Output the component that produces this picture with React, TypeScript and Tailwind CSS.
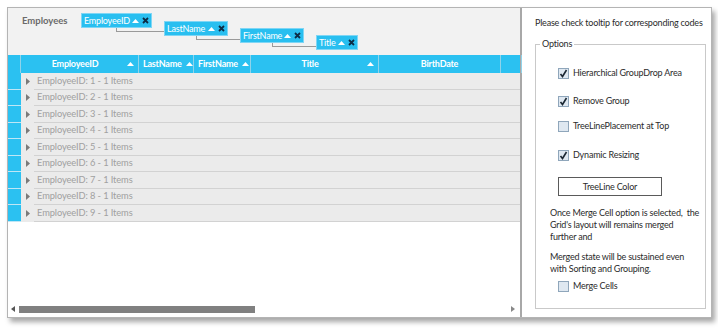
import React from "react";

const font = { fontFamily: 'Lato, "Open Sans", "DejaVu Sans", sans-serif' };

function Up({ className = "" }: { className?: string }) {
  return (
    <svg width="7" height="4" viewBox="0 0 7 4" className={className}>
      <polygon points="0,4 3.5,0 7,4" fill="currentColor" />
    </svg>
  );
}

function Chip({ label, x, y, w }: { label: string; x: number; y: number; w: number }) {
  return (
    <div
      className="absolute flex items-center h-[15px] bg-[#29bff0] border border-[#7fd6f5] text-white text-[9px] tracking-[-0.2px] leading-none pl-[2px] pr-[2px] whitespace-nowrap"
      style={{ left: x, top: y, width: w }}
    >
      <span className="flex-1">{label}</span>
      <Up className="text-white mr-[3px] shrink-0" />
      <svg width="7" height="7" viewBox="0 0 7 7" className="shrink-0">
        <path d="M1 1 L6 6 M6 1 L1 6" stroke="#0d2c45" strokeWidth="1.8" />
      </svg>
    </div>
  );
}

function Check({ checked }: { checked: boolean }) {
  return (
    <div className="w-[11px] h-[11px] shrink-0 border border-[#8fa6bb] bg-[#dfe8f1] flex items-center justify-center">
      {checked && (
        <svg width="9" height="9" viewBox="0 0 9 9">
          <path d="M1.5 5 L3.5 7.5 L7.5 1" stroke="#1b2733" strokeWidth="1.6" fill="none" />
        </svg>
      )}
    </div>
  );
}

export default function App() {
  const cols = [
    { name: "EmployeeID", w: 118, arrow: true, center: true },
    { name: "LastName", w: 55, arrow: true },
    { name: "FirstName", w: 57, arrow: true },
    { name: "Title", w: 128, arrow: true, center: true },
    { name: "BirthDate", w: 122, arrow: false, center: true },
    { name: "", w: 21, arrow: false },
  ];
  return (
    <div className="w-[718px] h-[330px] bg-white overflow-hidden pl-[7px] pt-[7px]" style={font}>
      <div className="flex w-[705px] h-[311px] border border-[#b4b4b4] shadow-[3px_4px_5px_rgba(0,0,0,0.35)] overflow-hidden">
        {/* Left grid panel */}
        <div className="w-[514px] shrink-0 h-full flex flex-col bg-white border-r-2 border-[#a8a8a8]">
          {/* group drop area */}
          <div className="relative h-[47px] bg-[#f2f2f2] shrink-0">
            <div className="absolute left-[14px] top-[6px] text-[9.5px] font-bold text-[#6b6b6b]">Employees</div>
            {/* connectors */}
            <div className="absolute left-[108px] top-[19px] w-[49px] h-[5px] border-l border-b border-[#9a9a9a]" />
            <div className="absolute left-[188px] top-[27px] w-[45px] h-[5px] border-l border-b border-[#9a9a9a]" />
            <div className="absolute left-[264px] top-[34px] w-[45px] h-[5px] border-l border-b border-[#9a9a9a]" />
            <Chip label="EmployeeID" x={73} y={5} w={71} />
            <Chip label="LastName" x={156} y={13} w={64} />
            <Chip label="FirstName" x={232} y={20} w={64} />
            <Chip label="Title" x={308} y={27} w={42} />
          </div>
          {/* header */}
          <div className="flex h-[18px] bg-[#2bc1f1] shrink-0">
            <div className="w-[13px] shrink-0 border-r border-[#8fd3ea]" />
            {cols.map((c, i) => (
              <div
                key={i}
                className="relative flex items-center shrink-0 h-full border-r border-[#8fd3ea] text-white font-bold text-[9px] tracking-[-0.2px] px-[4px] whitespace-nowrap"
                style={{ width: c.w }}
              >
                <span className={c.center ? "flex-1 text-center" : ""}>{c.name}</span>
                {c.arrow && <Up className={c.center ? "text-white ml-[2px] shrink-0" : "text-white ml-[4px] shrink-0"} />}
              </div>
            ))}
          </div>
          {/* rows */}
          <div className="flex flex-col shrink-0">
            {Array.from({ length: 9 }).map((_, i) => (
              <div key={i} className="flex h-[16.5px]">
                <div className="w-[13px] bg-[#2bc1f1] border-b border-[#bfe6f5]" />
                <div className="w-[13px] bg-[#ebebeb] flex items-center justify-center">
                  <svg width="4" height="7" viewBox="0 0 4 7">
                    <polygon points="0,0 4,3.5 0,7" fill="#7a7a7a" />
                  </svg>
                </div>
                <div className="flex-1 bg-[#ebebeb] border-b border-[#d2d2d2] flex items-center pl-[3px] text-[9.3px] tracking-[-0.1px] text-[#a0a0a0]">
                  EmployeeID: {i + 1} - 1 Items
                </div>
              </div>
            ))}
          </div>
          <div className="flex-1" />
          {/* scrollbar */}
          <div className="flex items-center h-[8px] mb-[4px] pl-[3px] pr-[5px] shrink-0">
            <svg width="4" height="6" viewBox="0 0 4 6">
              <polygon points="4,0 0,3 4,6" fill="#555" />
            </svg>
            <div className="ml-[4px] w-[236px] h-[7px] bg-[#808080]" />
            <div className="flex-1" />
            <svg width="4" height="6" viewBox="0 0 4 6">
              <polygon points="0,0 4,3 0,6" fill="#888" />
            </svg>
          </div>
        </div>
        {/* Right options panel */}
        <div className="w-[188px] shrink-0 h-full flex flex-col bg-white pl-[13px] pr-[4px] text-[#2b2b2b] text-[9px] tracking-[-0.2px]">
          <div className="mt-[9px] whitespace-nowrap leading-[12px]">Please check tooltip for corresponding codes</div>
          <div className="relative mt-[15px] h-[265px] border border-[#c9c9c9]">
            <div className="absolute left-[4px] top-[-7px] bg-white px-[2px] leading-[12px]">Options</div>
            <div className="flex flex-col pl-[22px] pt-[22px]">
              <div className="flex items-center gap-[4px] h-[12px]">
                <Check checked />
                <span>Hierarchical GroupDrop Area</span>
              </div>
              <div className="flex items-center gap-[4px] h-[12px] mt-[16px]">
                <Check checked />
                <span>Remove Group</span>
              </div>
              <div className="flex items-center gap-[4px] h-[12px] mt-[13px]">
                <Check checked={false} />
                <span>TreeLinePlacement at Top</span>
              </div>
              <div className="flex items-center gap-[4px] h-[12px] mt-[17px]">
                <Check checked />
                <span>Dynamic Resizing</span>
              </div>
              <div className="mt-[16px] w-[104px] h-[19px] border border-[#5a5a5a] flex items-center justify-center">
                TreeLine Color
              </div>
            </div>
            <div className="pl-[14px] pr-[2px] mt-[11px] leading-[12px] whitespace-nowrap">
              <div>
                Once Merge Cell option is selected,&nbsp; the
                <br />
                Grid's layout will remains merged
                <br />
                further and
              </div>
              <div className="mt-[8px]">
                Merged state will be sustained even
                <br />
                with Sorting and Grouping.
              </div>
              <div className="flex items-center gap-[4px] h-[12px] mt-[5px] pl-[8px]">
                <Check checked={false} />
                <span>Merge Cells</span>
              </div>
            </div>
          </div>
        </div>
      </div>
    </div>
  );
}
